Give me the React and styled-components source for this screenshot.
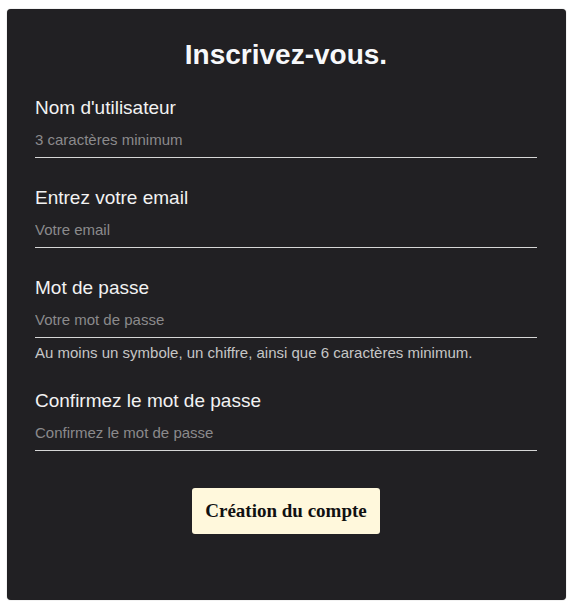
import React from "react";
import styled, { createGlobalStyle } from "styled-components";

const Global = createGlobalStyle`
  html, body { margin: 0; padding: 0; background: #ffffff; }
  body { font-family: "Liberation Sans", Arial, sans-serif; }
  * { box-sizing: border-box; }
`;

const Page = styled.div`
  padding: 9px 8px 9px 7px;
`;

const Card = styled.form`
  width: 559px;
  height: 591px;
  background: #212023;
  border-radius: 4px;
  padding: 30px 29px 0 28px;
  display: flex;
  flex-direction: column;
  box-shadow: 0 0 1px rgba(0,0,0,0.5);
`;

const Title = styled.h1`
  margin: 0 0 26px;
  text-align: center;
  color: #f7f8fa;
  font-size: 28px;
  font-weight: 700;
  line-height: 32px;
`;

const Field = styled.div`
  display: flex;
  flex-direction: column;
  margin-bottom: ${(p) => (p.$hint ? "0" : "29px")};
`;

const Label = styled.label`
  color: #f2f2f2;
  font-size: 19px;
  line-height: 22px;
`;

const Input = styled.input`
  background: transparent;
  border: none;
  border-bottom: 1px solid #d6d6d6;
  color: #e0e0e0;
  font-family: "Liberation Sans", Arial, sans-serif;
  font-size: 15px;
  line-height: 17px;
  padding: 12px 0 9px;
  height: 39px;
  outline: none;
  &::placeholder { color: #8b8a8c; }
`;

const Hint = styled.p`
  margin: 6px 0 29px;
  color: #c6c6c6;
  font-size: 15px;
  line-height: 17px;
`;

const Actions = styled.div`
  display: flex;
  justify-content: center;
  margin-top: 8px;
`;

const Button = styled.button`
  background: #fff8dc;
  border: none;
  border-radius: 3px;
  width: 188px;
  height: 46px;
  font-family: "Liberation Serif", "Times New Roman", serif;
  font-weight: 700;
  font-size: 19px;
  color: #111;
  cursor: pointer;
`;

export default function App() {
  return (
    <>
      <Global />
      <Page>
        <Card onSubmit={(e) => e.preventDefault()}>
          <Title>Inscrivez-vous.</Title>
          <Field>
            <Label>Nom d'utilisateur</Label>
            <Input placeholder="3 caractères minimum" />
          </Field>
          <Field>
            <Label>Entrez votre email</Label>
            <Input placeholder="Votre email" />
          </Field>
          <Field $hint>
            <Label>Mot de passe</Label>
            <Input type="password" placeholder="Votre mot de passe" />
          </Field>
          <Hint>Au moins un symbole, un chiffre, ainsi que 6 caractères minimum.</Hint>
          <Field>
            <Label>Confirmez le mot de passe</Label>
            <Input type="password" placeholder="Confirmez le mot de passe" />
          </Field>
          <Actions>
            <Button type="submit">Création du compte</Button>
          </Actions>
        </Card>
      </Page>
    </>
  );
}
